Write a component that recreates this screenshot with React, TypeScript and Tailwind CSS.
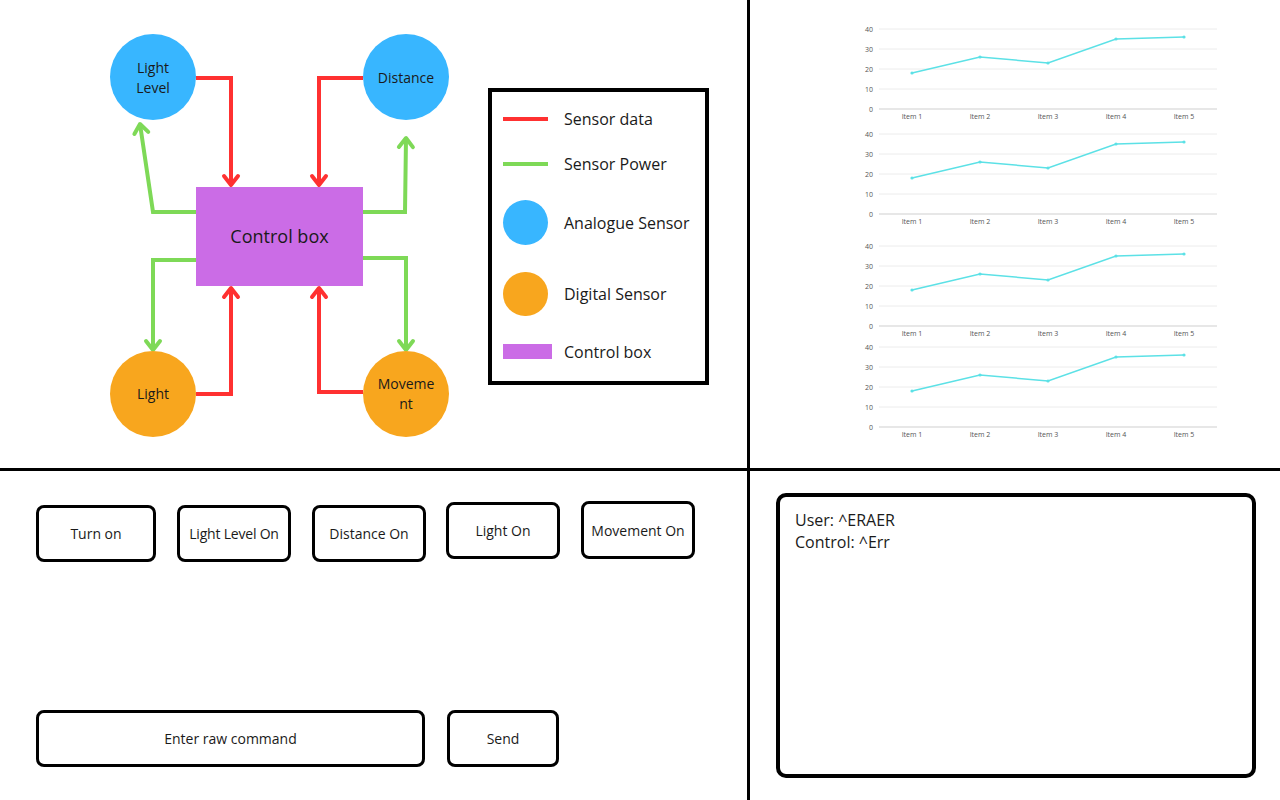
import React from "react";

const RED = "#ff3131";
const GREEN = "#7ed957";
const BLUE = "#38b6ff";
const ORANGE = "#f8a61e";
const PURPLE = "#cb6ce6";
const CYAN = "#5ce1e6";

function Arrow({ pts, color }: { pts: [number, number][]; color: string }) {
  const d = pts.map((p, i) => (i === 0 ? "M" : "L") + p[0] + " " + p[1]).join(" ");
  const [x2, y2] = pts[pts.length - 1];
  const [x1, y1] = pts[pts.length - 2];
  const len = Math.hypot(x2 - x1, y2 - y1);
  const ux = (x2 - x1) / len;
  const uy = (y2 - y1) / len;
  const px = -uy;
  const py = ux;
  const back = 9;
  const half = 7;
  const a = [x2 - ux * back + px * half, y2 - uy * back + py * half];
  const b = [x2 - ux * back - px * half, y2 - uy * back - py * half];
  return (
    <g stroke={color} strokeWidth={4} fill="none" strokeLinejoin="miter">
      <path d={d} />
      <path d={`M${a[0]} ${a[1]} L${x2} ${y2} L${b[0]} ${b[1]}`} strokeLinecap="round" strokeLinejoin="round" />
    </g>
  );
}

function Diagram() {
  const font = { fontFamily: "'Open Sans', sans-serif" };
  return (
    <svg width={488} height={468} viewBox="0 0 488 468" className="shrink-0">
      <Arrow color={RED} pts={[[196, 78], [231, 78], [231, 185]]} />
      <Arrow color={RED} pts={[[363, 78], [319, 78], [319, 185]]} />
      <Arrow color={RED} pts={[[196, 394], [231, 394], [231, 288]]} />
      <Arrow color={RED} pts={[[363, 392], [319, 392], [319, 288]]} />
      <Arrow color={GREEN} pts={[[196, 212], [153, 212], [140, 124]]} />
      <Arrow color={GREEN} pts={[[363, 212], [405, 212], [406, 138]]} />
      <Arrow color={GREEN} pts={[[196, 260], [153, 260], [153, 350]]} />
      <Arrow color={GREEN} pts={[[363, 258], [406, 258], [406, 350]]} />

      <circle cx={153} cy={77} r={43} fill={BLUE} />
      <circle cx={406} cy={77} r={43} fill={BLUE} />
      <circle cx={153} cy={394} r={43} fill={ORANGE} />
      <circle cx={406} cy={394} r={43} fill={ORANGE} />
      <rect x={196} y={187} width={167} height={99} fill={PURPLE} />

      <g style={font} fontSize={14} fill="#1a1a1a" textAnchor="middle">
        <text x={153} y={73}>Light</text>
        <text x={153} y={93}>Level</text>
        <text x={406} y={83}>Distance</text>
        <text x={153} y={399}>Light</text>
        <text x={406} y={389}>Moveme</text>
        <text x={406} y={409}>nt</text>
        <text x={279.5} y={243} fontSize={18}>Control box</text>
      </g>
    </svg>
  );
}

function Legend() {
  return (
    <div className="mt-[88px] ml-0 flex h-[297px] w-[221px] shrink-0 flex-col border-4 border-black pl-[11px] text-[16px] text-[#1a1a1a]">
      <div className="mt-[17px] flex h-[20px] items-center">
        <div className="h-[4px] w-[45px] bg-[#ff3131]" />
        <span className="ml-[16px]">Sensor data</span>
      </div>
      <div className="mt-[25px] flex h-[20px] items-center">
        <div className="h-[4px] w-[45px] bg-[#7ed957]" />
        <span className="ml-[16px]">Sensor Power</span>
      </div>
      <div className="mt-[26px] flex h-[45px] items-center">
        <div className="h-[45px] w-[45px] rounded-full bg-[#38b6ff]" />
        <span className="ml-[16px]">Analogue Sensor</span>
      </div>
      <div className="mt-[27px] flex h-[44px] items-center">
        <div className="h-[44px] w-[45px] rounded-full bg-[#f8a61e]" />
        <span className="ml-[16px]">Digital Sensor</span>
      </div>
      <div className="mt-[28px] flex h-[15px] items-center">
        <div className="h-[15px] w-[49px] bg-[#cb6ce6]" />
        <span className="ml-[12px]">Control box</span>
      </div>
    </div>
  );
}

const DATA = [18, 26, 23, 35, 36];
const XS = [53, 121, 189, 257, 325];

function Chart({ className }: { className: string }) {
  const yOf = (v: number) => 88 - v * 2;
  const pts = DATA.map((v, i) => `${XS[i]},${yOf(v)}`).join(" ");
  return (
    <svg width={370} height={100} viewBox="0 0 370 100" className={className} style={{ fontFamily: "'Open Sans', sans-serif" }}>
      {[40, 30, 20, 10].map((v) => (
        <line key={v} x1={20} x2={358} y1={yOf(v)} y2={yOf(v)} stroke="#ececec" strokeWidth={1} />
      ))}
      <line x1={20} x2={358} y1={88} y2={88} stroke="#cfcfcf" strokeWidth={1} />
      {[40, 30, 20, 10, 0].map((v) => (
        <text key={v} x={14} y={yOf(v) + 2.5} fontSize={7} fill="#555" textAnchor="end">
          {v}
        </text>
      ))}
      {XS.map((x, i) => (
        <text key={i} x={x} y={98} fontSize={7} fill="#555" textAnchor="middle">
          Item {i + 1}
        </text>
      ))}
      <polyline points={pts} fill="none" stroke={CYAN} strokeWidth={1.5} />
      {DATA.map((v, i) => (
        <circle key={i} cx={XS[i]} cy={yOf(v)} r={1.6} fill={CYAN} />
      ))}
    </svg>
  );
}

function Btn({ label, className }: { label: string; className: string }) {
  return (
    <div className={`flex shrink-0 items-center justify-center rounded-[8px] border-[3px] border-black text-[14px] text-[#1a1a1a] ${className}`}>
      {label}
    </div>
  );
}

export default function App() {
  return (
    <div
      className="flex h-[800px] w-[1280px] flex-col overflow-hidden bg-white"
      style={{ fontFamily: "'Open Sans', 'Noto Sans', sans-serif" }}
    >
      <div className="flex h-[468px] shrink-0">
        <div className="flex w-[747px] shrink-0">
          <Diagram />
          <Legend />
        </div>
        <div className="w-[3px] shrink-0 bg-black" />
        <div className="flex flex-1 flex-col pl-[109px]">
          <Chart className="mt-[21px]" />
          <Chart className="mt-[5px]" />
          <Chart className="mt-[12px]" />
          <Chart className="mt-[1px]" />
        </div>
      </div>
      <div className="h-[3px] shrink-0 bg-black" />
      <div className="flex flex-1">
        <div className="flex w-[747px] shrink-0 flex-col pl-[36px] pt-[30px]">
          <div className="flex items-start">
            <Btn label="Turn on" className="mt-[4px] h-[57px] w-[120px]" />
            <Btn label="Light Level On" className="ml-[21px] mt-[4px] h-[57px] w-[114px] tracking-[-0.2px]" />
            <Btn label="Distance On" className="ml-[21px] mt-[4px] h-[57px] w-[114px]" />
            <Btn label="Light On" className="ml-[20px] mt-[1px] h-[57px] w-[114px]" />
            <Btn label="Movement On" className="ml-[21px] mt-0 h-[58px] w-[114px]" />
          </div>
          <div className="mt-[148px] flex">
            <Btn label="Enter raw command" className="h-[57px] w-[389px]" />
            <Btn label="Send" className="ml-[22px] h-[57px] w-[112px]" />
          </div>
        </div>
        <div className="w-[3px] shrink-0 bg-black" />
        <div className="flex flex-1 pb-[22px] pl-[26px] pr-[24px] pt-[22px]">
          <div className="flex-1 rounded-[10px] border-4 border-black pl-[15px] pt-[12px] text-[16px] leading-[22px] text-[#1a1a1a]">
            <div>User: ^ERAER</div>
            <div>Control: ^Err</div>
          </div>
        </div>
      </div>
    </div>
  );
}
